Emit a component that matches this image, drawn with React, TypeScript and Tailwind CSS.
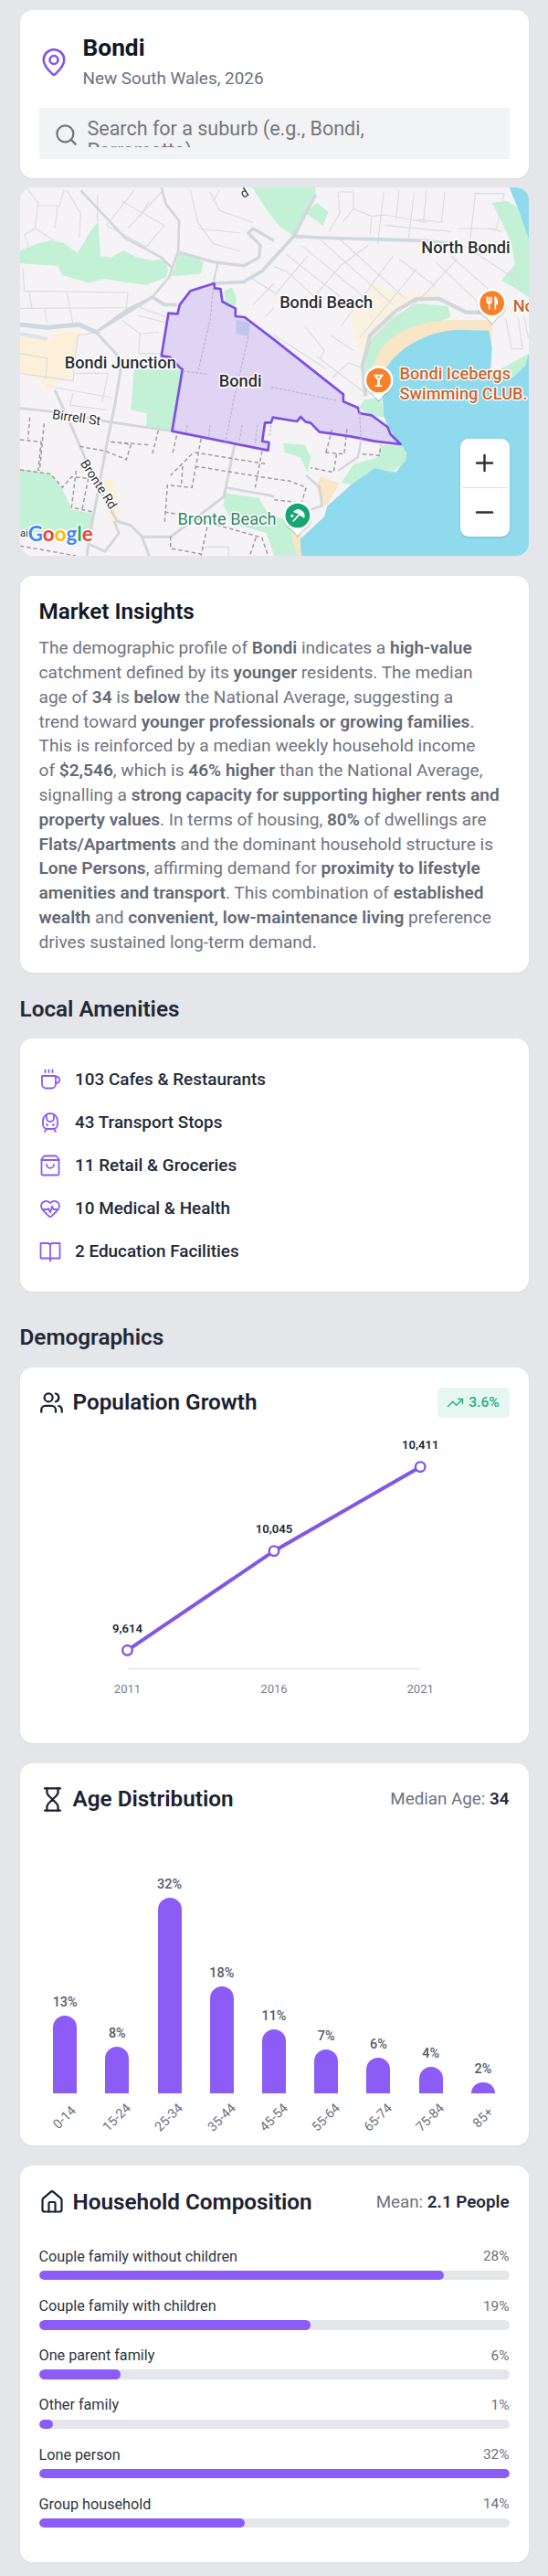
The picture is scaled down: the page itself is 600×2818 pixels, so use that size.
import type { ReactNode } from "react";
import { HeartPulse, House, Minus, Plus, Search, TrainFront, TrendingUp, Users } from "lucide-react";

const ageGroups = [
  { label: "0-14", value: 13, height: 85.5 },
  { label: "15-24", value: 8, height: 51 },
  { label: "25-34", value: 32, height: 214 },
  { label: "35-44", value: 18, height: 117.5 },
  { label: "45-54", value: 11, height: 70 },
  { label: "55-64", value: 7, height: 48.5 },
  { label: "65-74", value: 6, height: 39.5 },
  { label: "75-84", value: 4, height: 29.5 },
  { label: "85+", value: 2, height: 12 },
];

const households = [
  { label: "Couple family without children", value: 28, width: 86.1 },
  { label: "Couple family with children", value: 19, width: 57.7 },
  { label: "One parent family", value: 6, width: 17.3 },
  { label: "Other family", value: 1, width: 3 },
  { label: "Lone person", value: 32, width: 100 },
  { label: "Group household", value: 14, width: 43.7 },
];

const population = [
  { year: "2011", label: "9,614", x: 96.5, y: 248.3 },
  { year: "2016", label: "10,045", x: 257, y: 139.7 },
  { year: "2021", label: "10,411", x: 417.2, y: 47.7 },
];

interface IconProps {
  className?: string;
  size?: number;
  strokeWidth?: number;
  children?: ReactNode;
}

const Icon = ({ className, size = 24, strokeWidth = 1.8, children }: IconProps) => (
  <svg
    className={className}
    width={size}
    height={size}
    viewBox="0 0 24 24"
    fill="none"
    stroke="currentColor"
    strokeWidth={strokeWidth}
    strokeLinecap="round"
    strokeLinejoin="round"
  >
    {children}
  </svg>
);

const PinIcon = () => (
  <Icon size={30} strokeWidth={2.1} className="shrink-0 text-[#8257e5]">
    <path d="M21 10c0 4.6-4 9-7.6 12.3a2 2 0 0 1-2.8 0C7 19 3 14.6 3 10a9 9 0 0 1 18 0z" />
    <circle cx="12" cy="10" r="3.6" />
  </Icon>
);

const CupIcon = () => (
  <Icon>
    <path d="M3 8h15v9a4.5 4.5 0 0 1-4.5 4.5h-6A4.5 4.5 0 0 1 3 17z" />
    <path d="M18 9h1.5a2.7 2.7 0 0 1 2.7 2.7v.8a3.5 3.5 0 0 1-3.5 3.5H18" />
    <path d="M6.5 1.5v2.5M10.5 1.5v2.5M14.5 1.5v2.5" />
  </Icon>
);

const BagIcon = () => (
  <Icon>
    <path d="M5.5 1.5h13L21.5 5v16a1.5 1.5 0 0 1-1.5 1.5H4A1.5 1.5 0 0 1 2.5 21V5z" />
    <path d="M2.5 6h19" />
    <path d="M8 11a4 3.8 0 0 0 8 0" />
  </Icon>
);

const BookIcon = () => (
  <Icon>
    <path d="M1.5 3H9a3 3 0 0 1 3 2.5A3 3 0 0 1 15 3h7.5v16.5H14a2 2 0 0 0-2 1.5 2 2 0 0 0-2-1.5H1.5z" />
    <path d="M12 5.5V22.5" />
  </Icon>
);

const HourglassIcon = () => (
  <Icon size={29} strokeWidth={1.9}>
    <path d="M5 2h14M5 22h14" />
    <path d="M7 2v3.5c0 2.5 3.2 4.5 5 6.5 1.8-2 5-4 5-6.5V2" />
    <path d="M7 22v-3.5c0-2.5 3.2-4.5 5-6.5 1.8 2 5 4 5 6.5V22" />
  </Icon>
);

const amenities = [
  { icon: <CupIcon />, label: "103 Cafes & Restaurants" },
  { icon: <TrainFront size={24} strokeWidth={1.8} />, label: "43 Transport Stops" },
  { icon: <BagIcon />, label: "11 Retail & Groceries" },
  { icon: <HeartPulse size={24} strokeWidth={1.8} />, label: "10 Medical & Health" },
  { icon: <BookIcon />, label: "2 Education Facilities" },
];

const MapPinMarker = ({ x, y, color, children }: { x: number; y: number; color: string; children: ReactNode }) => (
  <g transform={`translate(${x} ${y})`}>
    <path d="M0 68L-20 45A48 48 0 1 1 20 45Z" fill="#7a8a90" opacity="0.35" transform="translate(0 4)" />
    <path d="M0 66L-20 44A48 48 0 1 1 20 44Z" fill="#fff" />
    <circle r="40" fill={color} />
    {children}
  </g>
);

const boundary =
  "703,330 625,355 590,400 583,430 553,428 530,568 558,572 590,606 599,612 565,815 880,878 883,852 861,848 870,787 890,787 896,770 975,783 987,768 1003,784 1020,788 1048,817 1150,832 1230,848 1315,858 1282,825 1272,801 1220,763 1180,756 1175,738 1127,718 1127,694 900,515 803,441 773,438 773,412 730,390 724,348 705,346";

const SuburbMap = () => (
  <svg className="block h-full w-full" viewBox="66 15 1670 1209" preserveAspectRatio="none">
    <rect x="66" y="15" width="1670" height="1209" fill="#f5f3f5" />

    {/* Parks */}
    <g fill="#c3f1d5">
      <path d="M66 222L120 200 165 188 210 198 255 230 290 170 322 125 330 240 365 245 405 222 450 245 500 255 540 250 552 285 545 310 480 335 400 325 345 315 290 328 205 303 190 272 66 265Z" />
      <path d="M585 232L640 240 668 262 660 298 610 303 560 306 575 275Z" />
      <path d="M440 612L598 612 565 812 480 798 482 757 430 745Z" />
      <path d="M66 940L165 955 205 1005 235 1072 305 1085 295 1135 250 1150 66 1150Z" />
      <path d="M828 15H1035L1038 45 985 130 965 175 920 145 880 95Z" />
      <path d="M1040 65L1078 95 1060 140 1003 100Z" />
      <path d="M735 355L762 343 776 380 772 405 740 390Z" />
      <path d="M738 1018L850 1035 880 1085 980 1120 990 1224 900 1224 875 1150 770 1120 733 1060Z" />
      <path d="M1615 65L1665 60 1715 90 1736 150V375L1690 345 1645 320 1690 270 1680 200 1650 135Z" />
      <path d="M1200 560L1220 510 1290 440 1370 395 1470 405 1480 440 1330 500 1240 600 1200 650Z" />
      <path d="M1195 712L1250 705 1262 770 1215 762 1180 740Z" />
      <path d="M930 855L1000 860 1020 900 1010 950 985 900 935 885Z" />
    </g>

    {/* Commercial areas */}
    <g fill="#fcf1d8">
      <path d="M66 505L165 510 190 485 262 490 250 560 240 640 205 645 160 670 130 645 66 620Z" />
      <path d="M1150 440L1230 330 1330 370 1440 345 1445 375 1330 400 1240 480 1190 560 1165 530Z" opacity="0.7" />
      <path d="M340 975L370 970 400 1120 375 1130 350 1080Z" />
      <path d="M170 665L140 655 155 685Z" />
    </g>

    {/* Water and sand */}
    <path d="M1225 610C1240 520 1330 455 1480 450H1615V520H1480L1290 625Z" fill="#f8e6c6" />
    <path d="M1050 965L1115 985 1075 1055 1055 1060 1040 1000Z" fill="#f8e6c6" />
    <path d="M955 1150L985 1150 1000 1224 975 1224Z" fill="#f8e6c6" />
    <path
      d="M1736 560V1224H990L985 1170 1065 1095 1075 1060 1160 985 1230 935 1300 950 1333 905 1325 870 1310 855 1275 802 1260 765 1255 700 1260 620C1290 560 1380 490 1500 482L1605 485 1615 540 1610 625 1680 640Z"
      fill="#8fdaed"
    />
    <path d="M1250 862L1315 860 1336 888 1330 915 1285 950 1230 935 1155 990 1120 985 1160 925 1240 900Z" fill="#c3f1d5" />
    <path d="M1672 15H1736V185L1705 95Z" fill="#8fdaed" />
    <path d="M1610 630L1736 560 1725 600 1685 638Z" fill="#c3f1d5" />

    {/* Minor streets */}
    <g fill="none" stroke="#dcdde1" strokeWidth="3.5">
      <path d="M85 15L125 65 115 150 180 190M125 75H195L210 25M180 150L190 75M115 150L80 170 95 215M220 25L265 100 260 180M320 40V125" />
      <path d="M440 25L350 140 480 210 540 140 400 60M530 30L420 150M460 110L490 60" />
      <path d="M625 25L650 130 700 200 790 225M690 30L720 90 830 130M720 25L700 60M650 150L790 165" />
      <path d="M75 280L80 355 420 360 415 410 66 412M95 360L105 410M220 362L240 465M145 412L155 460" />
      <path d="M66 560L155 575 150 645M66 625L240 650M240 650L255 500 330 490M250 625H355L335 720M180 672L370 705M240 690L230 730 350 745" />
      <path d="M470 385L460 410 545 440M450 435L550 460M400 450L460 495 520 490M460 495L455 560H530" />
      <path d="M900 275L940 290 1050 390M940 235L1150 400M990 205L1200 380M1050 185L1290 400M1110 180L1330 380" />
      <path d="M900 370L1010 240M1000 410L1120 270 1210 205M1120 470L1290 240M1180 510L1370 280M1210 530L1400 360 1500 250" />
      <path d="M1000 470L1065 550 1050 580M1090 640L1145 590 1190 610M1160 550L1085 500M1040 570L1200 690M900 500L1070 610" />
      <path d="M1110 30L1115 100 1080 160M1160 30V85L1220 110 1215 170M1260 30L1240 200M1310 25L1300 120M1360 30L1340 190M1400 25L1390 130M1460 30L1450 130 1370 120M1560 40L1540 220" />
      <path d="M1115 30H1160M1160 85L1125 130M1220 110L1265 105M1265 105L1400 130M1265 140L1480 160M1555 35H1655L1630 150 1500 150M1430 260L1600 420M1480 240L1650 390M1530 210L1700 320M1310 250L1430 340M1600 150L1650 160" />
      <path d="M1660 445L1680 545H1715L1700 440M1720 440L1735 510" />
      <path d="M660 1195H750V1224M820 310L900 360M830 400L900 330M870 440L900 410" />
    </g>

    {/* Main roads */}
    <g fill="none" stroke="#d3d6db" strokeWidth="8" strokeLinejoin="round">
      <path d="M265 25L410 180 530 245 565 280 555 310 500 375 410 420 315 490" />
      <path d="M530 15L545 70 588 125 585 225 565 280" />
      <path d="M66 465L155 475 260 465 315 490" strokeWidth="15" stroke="#cfd8df" />
      <path d="M66 495L155 512" strokeWidth="12" stroke="#dde3e8" />
      <path d="M330 480L500 375 540 400 580 400" stroke="#cfd8df" strokeWidth="11" />
      <path d="M590 228L700 260 800 272 850 245 855 205 815 165 830 150 900 190" strokeWidth="10" />
      <path d="M700 330L800 325 860 290 965 175 1050 180 1400 190 1480 200" stroke="#cfd8df" strokeWidth="11" />
      <path d="M1036 40L965 175" strokeWidth="10" />
      <path d="M715 265L700 330" strokeWidth="6" />
      <path d="M315 490L380 560 400 590 375 740 350 860 300 1130 285 1224" strokeWidth="9" />
      <path d="M66 740L180 752 360 785 565 815" />
      <path d="M180 680L235 800 300 950 350 1050 385 1110 430 1125 465 1160 490 1224M465 1162L560 1162 590 1140 735 1030 770 860" strokeWidth="9" />
      <path d="M740 1000L880 1025 900 1030M290 1185L345 1210 390 1150 375 1110" />
      <path d="M1200 700L1190 600 1215 500 1300 420 1365 382 1440 380 1530 425 1610 425" strokeWidth="13" />
      <path d="M1005 960L1050 1000 1057 1060 1000 1080" />
      <path d="M1110 945L1175 900 1185 850" strokeWidth="7" />
    </g>

    {/* Walking paths */}
    <g fill="none" stroke="#a09ca3" strokeWidth="4.5" strokeDasharray="13 9">
      <path d="M66 843L135 850 125 945M66 942L165 955 205 1000 235 965 290 970M98 770L92 840M145 790L130 945" />
      <path d="M262 865L345 880 415 908 430 858 360 850 490 860M520 812L500 890M580 830L565 895M250 945L235 1065 305 1080M290 970L270 1070" />
      <path d="M660 840L630 1000 550 992M640 885L870 922M640 930L900 972M860 880L838 1000M600 930L595 995M550 990L540 1120M630 890L560 960" />
      <path d="M540 1080L600 1090 860 1165 880 1224M66 1192L250 1224M560 1160V1200L660 1218M680 1130L660 1224M840 1165L820 1224" />
      <path d="M1070 885L1090 810M1068 885L1130 890 1140 800M1105 890L1095 950 1020 935M1190 890L1245 895 1250 860" />
      <path d="M900 972L950 978 1005 1000 990 1050M900 1040L990 1050" />
    </g>

    {/* Suburb boundary */}
    <polygon points={boundary} fill="#b794f6" fillOpacity="0.33" stroke="#7c4fe3" strokeWidth="8" strokeLinejoin="round" />
    <path d="M775 450L822 460 815 505 775 495Z" fill="#b9bfe8" opacity="0.8" />
    <g fill="none" stroke="#b9b3cf" strokeWidth="3.5" strokeDasharray="9 5">
      <path d="M700 345L690 450 650 620M815 505L770 700 740 850M600 618L680 628M890 670L1110 715M1180 740L1185 850" />
      <path d="M615 795L610 820M690 795L685 835M795 795L785 850M845 795L838 855M890 795L885 830" />
    </g>

    {/* Place names */}
    <g
      fontFamily="Roboto, sans-serif"
      fontSize="54.5"
      fontWeight="500"
      fill="#2c2d30"
      stroke="#fff"
      strokeWidth="9"
      strokeLinejoin="round"
      paintOrder="stroke"
    >
      <text x="212" y="609">Bondi Junction</text>
      <text x="719" y="670">Bondi</text>
      <text x="918" y="410">Bondi Beach</text>
      <text x="1383" y="230">North Bondi</text>
      <text x="170" y="774" fontSize="43" fontWeight="400" transform="rotate(8 170 774)">Birrell St</text>
      <text x="262" y="920" fontSize="42" fontWeight="400" transform="rotate(57 262 920)">Bronte Rd</text>
      <text x="800" y="52" fontSize="42" fontWeight="400" transform="rotate(-33 800 52)">d</text>
      <text x="583" y="1121" fontWeight="400" fill="#2d8664">Bronte Beach</text>
      <g fill="#c8652f" strokeWidth="8" fontWeight="500">
        <text x="1312" y="645">Bondi Icebergs</text>
        <text x="1312" y="711">Swimming CLUB.</text>
        <text x="1684" y="423">No</text>
      </g>
      <text x="66" y="1160" fontSize="34" fontWeight="400">ai</text>
    </g>

    <MapPinMarker x={1615} y={395} color="#f6812b">
      <g fill="none" stroke="#fff" strokeWidth="5" strokeLinecap="round">
        <path d="M-16 -19V-7Q-16 0 -9 0Q-2 0 -2 -7V-19M-9 -19V19" />
        <path d="M11 19V-19Q18 -14 17 2H11" fill="#fff" />
      </g>
    </MapPinMarker>
    <MapPinMarker x={1243} y={648} color="#f6812b">
      <path d="M-17 -19H17L4 0V16H11V21H-11V16H-4V0Z" fill="#fff" />
      <path d="M-6 -13H6L3 -8H-3Z" fill="#f6812b" />
    </MapPinMarker>
    <MapPinMarker x={977} y={1092} color="#17a673">
      <path d="M-15 -12Q0 -30 18 -13Q26 -4 22 9L10 1 2 -5Z" fill="#fff" />
      <path d="M6 -4L-14 18" stroke="#fff" strokeWidth="5" strokeLinecap="round" />
      <circle cx="-18" cy="1" r="5" fill="#fff" />
    </MapPinMarker>

    <text
      x="92"
      y="1177"
      fontFamily="Lato, sans-serif"
      fontSize="70"
      fontWeight="700"
      textLength="213"
      lengthAdjust="spacingAndGlyphs"
      stroke="#fff"
      strokeWidth="9"
      strokeLinejoin="round"
      paintOrder="stroke"
    >
      <tspan fill="#4285f4">G</tspan>
      <tspan fill="#ea4335">o</tspan>
      <tspan fill="#fbbc05">o</tspan>
      <tspan fill="#4285f4">g</tspan>
      <tspan fill="#34a853">l</tspan>
      <tspan fill="#ea4335">e</tspan>
    </text>
  </svg>
);

const Card = ({ className, children }: { className: string; children: ReactNode }) => (
  <section className={`rounded-[14px] bg-white px-[21px] shadow-[0_1px_3px_rgba(0,0,0,0.05)] ${className}`}>{children}</section>
);

const SectionTitle = ({ className, children }: { className: string; children: ReactNode }) => (
  <h2 className={`flex items-center text-[24.3px] font-semibold text-[#1f2937] ${className}`}>{children}</h2>
);

interface CardHeaderProps {
  icon: ReactNode;
  title: string;
  children: ReactNode;
}

const CardHeader = ({ icon, title, children }: CardHeaderProps) => (
  <div className="flex h-[34px] items-center justify-between text-[#1a2130]">
    <div className="flex items-center">
      <span className="flex w-[37px] items-center">{icon}</span>
      <h3 className="text-[24.3px] font-semibold leading-8">{title}</h3>
    </div>
    {children}
  </div>
);

const App = () => {
  return (
    <div className="h-[2818px] w-[600px] bg-[#e5e6ea] pl-[21.5px] pr-[21.5px] pt-[11px] font-['Roboto',sans-serif]">
      <Card className="h-[184px] pt-[23.5px]">
        <div className="flex items-center pl-[1.5px]">
          <PinIcon />
          <div className="ml-[16.5px]">
            <h1 className="text-[26.3px] font-bold leading-[35px] text-[#111827]">Bondi</h1>
            <p className="text-[18.9px] leading-[31px] text-[#6b7280]">New South Wales, 2026</p>
          </div>
        </div>
        <div className="mt-[17px] flex h-[56px] items-start bg-[#f2f3f5] pl-[16px] pt-[11px]">
          <Search size={27} strokeWidth={2} className="mt-[5px] text-[#75767a]" />
          <div className="ml-[10px] h-[32px] w-[330px] overflow-hidden text-[21.5px] leading-[24.6px] text-[#75767a]">
            Search for a suburb (e.g., Bondi, Parramatta)
          </div>
        </div>
      </Card>

      <div className="relative mt-[10px] h-[403px] overflow-hidden rounded-[14px]">
        <SuburbMap />
        <div className="absolute bottom-[21px] right-[21px] flex h-[107px] w-[54px] flex-col rounded-[9px] bg-white text-[#2b3038] shadow-sm">
          <button className="flex flex-1 items-center justify-center">
            <Plus size={29} strokeWidth={2} />
          </button>
          <div className="mx-[2px] h-px bg-[#dfe1e4]" />
          <button className="flex flex-1 items-center justify-center">
            <Minus size={29} strokeWidth={2} />
          </button>
        </div>
      </div>

      <Card className="mt-[21.7px] h-[434.3px] pt-[23.5px]">
        <h2 className="text-[24.3px] font-semibold leading-8 text-[#111827]">Market Insights</h2>
        <p className="mt-[11px] whitespace-nowrap text-[19.1px] leading-[26.8px] text-[#6f747f] [&_b]:font-semibold [&_b]:text-[#636975]">
          The demographic profile of <b>Bondi</b> indicates a <b>high-value</b>
          <br />
          catchment defined by its <b>younger</b> residents. The median
          <br />
          age of <b>34</b> is <b>below</b> the National Average, suggesting a
          <br />
          trend toward <b>younger professionals or growing families</b>.
          <br />
          This is reinforced by a median weekly household income
          <br />
          of <b>$2,546</b>, which is <b>46% higher</b> than the National Average,
          <br />
          signalling a <b>strong capacity for supporting higher rents and</b>
          <br />
          <b>property values</b>. In terms of housing, <b>80%</b> of dwellings are
          <br />
          <b>Flats/Apartments</b> and the dominant household structure is
          <br />
          <b>Lone Persons</b>, affirming demand for <b>proximity to lifestyle</b>
          <br />
          <b>amenities and transport</b>. This combination of <b>established</b>
          <br />
          <b>wealth</b> and <b>convenient, low-maintenance living</b> preference
          <br />
          drives sustained long-term demand.
        </p>
      </Card>

      <SectionTitle className="h-[71.7px] pb-[8px] pt-[16px]">Local Amenities</SectionTitle>

      <Card className="h-[277px] pt-[22.5px]">
        <ul>
          {amenities.map((item) => (
            <li key={item.label} className="flex h-[47px] items-center text-[18.9px] font-medium text-[#1f2937]">
              <span className="w-[39.5px] pb-[2px] text-[#8b5cf6]">{item.icon}</span>
              {item.label}
            </li>
          ))}
        </ul>
      </Card>

      <SectionTitle className="h-[83px] pt-[19px]">Demographics</SectionTitle>

      <Card className="h-[411.3px] pt-[21.5px]">
        <CardHeader icon={<Users size={27} strokeWidth={2} />} title="Population Growth">
          <div className="flex h-[33px] w-[79px] items-center justify-center gap-[5px] rounded-[5px] bg-[#e5f7f0] text-[15.5px] font-semibold text-[#32b186]">
            <TrendingUp size={19} strokeWidth={2} />
            3.6%
          </div>
        </CardHeader>
        <svg className="mt-[5.5px] block w-full" height="320" fontFamily="Roboto, sans-serif" fontSize="13.1" textAnchor="middle">
          <path d="M96.5 268.5H417.2" stroke="#e5e7eb" strokeWidth="1.5" />
          <polyline
            points={population.map((p) => `${p.x},${p.y}`).join(" ")}
            fill="none"
            stroke="#8257e5"
            strokeWidth="4"
          />
          {population.map((p) => (
            <g key={p.year}>
              <circle cx={p.x} cy={p.y} r="5.3" fill="#fff" stroke="#8257e5" strokeWidth="2.4" />
              <text x={p.x} y={p.y - 19.8} fontWeight="600" fill="#1f2937">
                {p.label}
              </text>
              <text x={p.x} y="295.3" fill="#7b808a">
                {p.year}
              </text>
            </g>
          ))}
        </svg>
      </Card>

      <Card className="mt-[22px] h-[418.3px] pt-[22.5px]">
        <CardHeader icon={<HourglassIcon />} title="Age Distribution">
          <p className="text-[18.8px] text-[#6b7280]">
            Median Age: <b className="font-semibold text-[#1f2937]">34</b>
          </p>
        </CardHeader>
        <div className="flex h-[305px] items-end">
          {ageGroups.map((group) => (
            <div key={group.label} className="flex flex-1 flex-col items-center">
              <span className="mb-[4px] text-[14.4px] font-medium leading-5 text-[#555b67]">{group.value}%</span>
              <div className="w-[26px] rounded-t-[13px] bg-[#8b5cf6]" style={{ height: group.height }} />
            </div>
          ))}
        </div>
        <div className="flex">
          {ageGroups.map((group) => (
            <div key={group.label} className="flex h-[53px] flex-1 items-center justify-center">
              <span className="-rotate-45 text-[14.4px] text-[#6b7280]">{group.label}</span>
            </div>
          ))}
        </div>
      </Card>

      <Card className="mt-[21.7px] h-[433.7px] pt-[23px]">
        <CardHeader icon={<House size={28} strokeWidth={1.9} />} title="Household Composition">
          <p className="text-[18.8px] text-[#6b7280]">
            Mean: <b className="font-semibold text-[#1f2937]">2.1 People</b>
          </p>
        </CardHeader>
        <div className="mt-[30px]">
          {households.map((item) => (
            <div key={item.label} className="h-[54.2px]">
              <div className="flex h-[28px] items-center justify-between pb-[2px] text-[16.2px] text-[#2d3542]">
                <span>{item.label}</span>
                <span className="text-[15.4px] text-[#6b7280]">{item.value}%</span>
              </div>
              <div className="h-[10.5px] overflow-hidden rounded-full bg-[#e5e6ea]">
                <div className="h-full rounded-full bg-[#8b5cf6]" style={{ width: `${item.width}%` }} />
              </div>
            </div>
          ))}
        </div>
      </Card>
    </div>
  );
};

export default App;
